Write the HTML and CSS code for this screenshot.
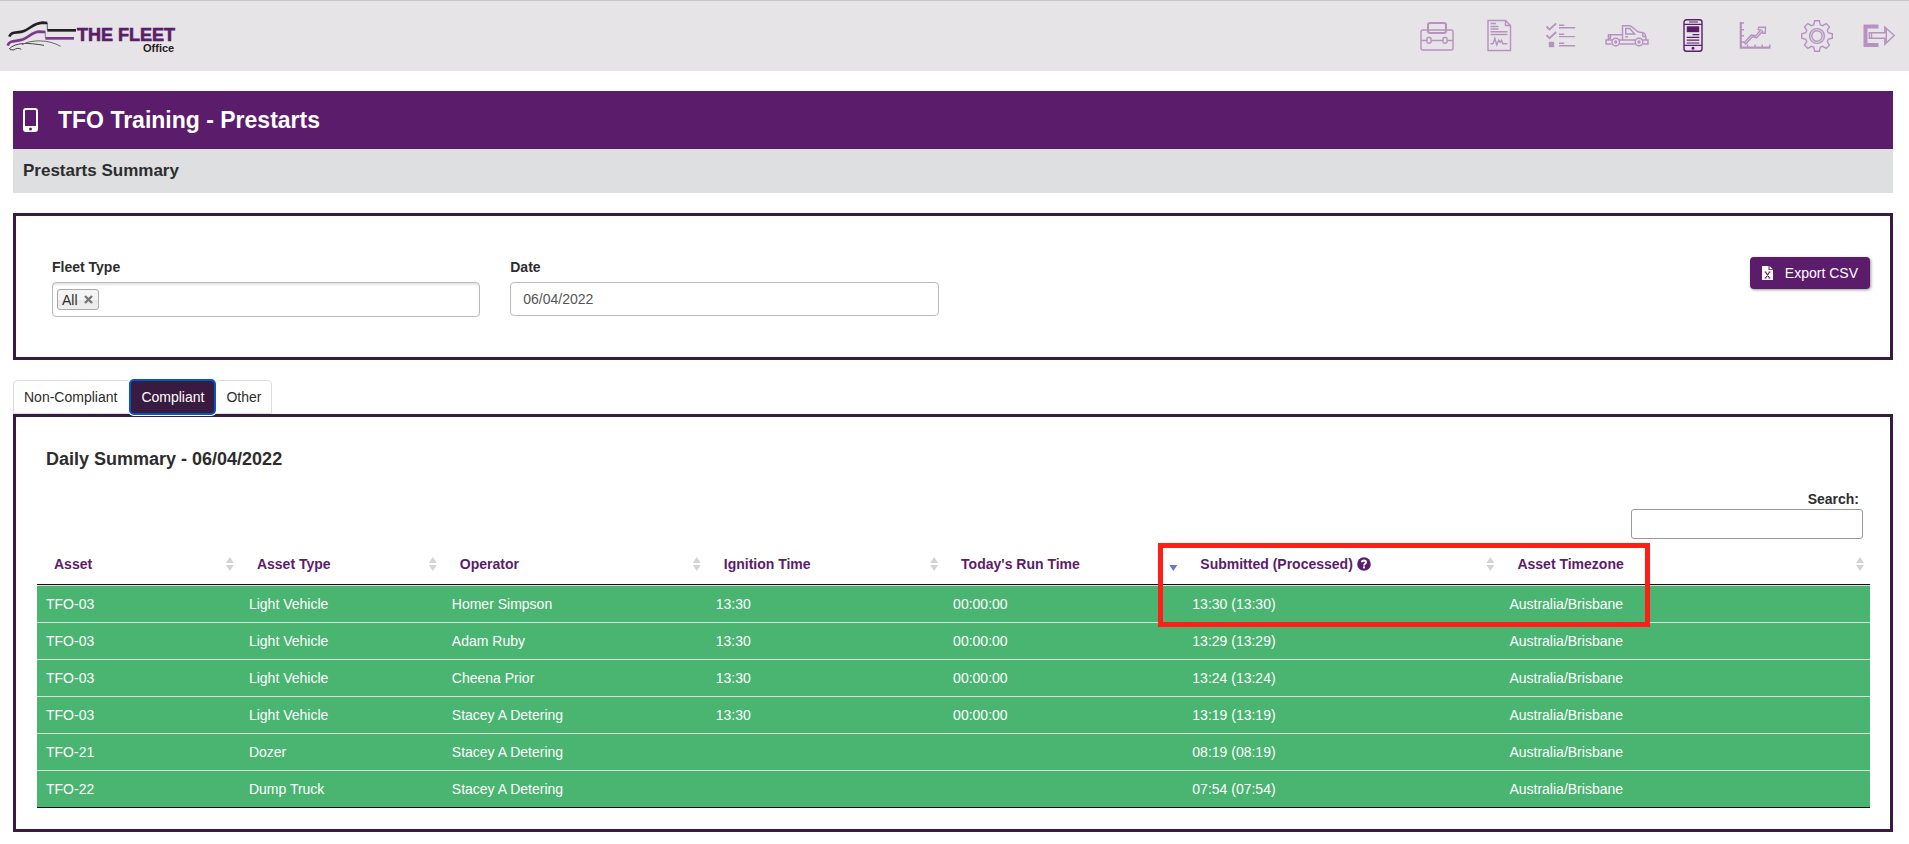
FILE: index.html
```html
<!DOCTYPE html>
<html lang="en">
<head>
  <meta charset="UTF-8">
  <title>TFO Training - Prestarts</title>
  <link rel="stylesheet" href="styles.css">
</head>
<body>

<header class="topbar">
  <a class="logo" href="#" aria-label="The Fleet Office">
    <svg width="180" height="70" viewBox="0 3 540 210">
      <g fill="none" stroke-linejoin="round">
        <path d="M28 110 C34 92 52 101 72 93 C92 85 100 70 128 68 L142 69" stroke="#222" stroke-width="8"/>
        <path d="M142 69 V90" stroke="#222" stroke-width="2"/>
        <path d="M142 91 H228" stroke="#222" stroke-width="8"/>
        <path d="M23 137 C28 118 50 126 70 118 C88 110 98 96 118 95 L136 96" stroke="#7b3a8e" stroke-width="8"/>
        <path d="M136 95 V114" stroke="#7b3a8e" stroke-width="2"/>
        <path d="M136 115 H222" stroke="#7b3a8e" stroke-width="8"/>
        <path d="M27 147 C48 126 84 128 132 136" stroke="#444" stroke-width="3"/>
        <path d="M30 149 L42 150 C46 145 56 143 64 148" stroke="#444" stroke-width="3"/>
        <path d="M66 134 C94 118 146 118 182 139" stroke="#666" stroke-width="3"/>
      </g>
      <text class="logo-name" x="231" y="123">THE FLEET</text>
      <text class="logo-sub" x="429" y="156">Office</text>
    </svg>
  </a>

  <nav class="menu">
    <a href="#" aria-label="Toolbox">
      <svg width="44" height="36" viewBox="0 0 44 36">
        <rect x="6" y="12" width="32" height="20" rx="2"/>
        <rect x="13" y="5" width="18" height="10" rx="2" stroke-width="2"/>
        <path d="M6 22.5H12M16 22.5H28M32 22.5H38"/>
        <rect x="12" y="19.5" width="4" height="5.5" rx="1"/>
        <rect x="28" y="19.5" width="4" height="5.5" rx="1"/>
      </svg>
    </a>
    <a href="#" aria-label="Reports">
      <svg width="44" height="36" viewBox="0 0 44 36">
        <path d="M11 2.5H28.5L33.5 7.5V32.5H11ZM28.5 2.5V7.5H33.5"/>
        <path d="M13.5 5.5H19M13.5 8.5H21.5M13.5 11H21.5M13.5 13.7H30.5M13.5 16.5H30.5"/>
        <path d="M13.5 25.7H16L17.8 20.3L19.8 27L21.8 22.3L23.2 24.3L24.5 22.3L25.8 25.7H30.5"/>
      </svg>
    </a>
    <a href="#" aria-label="Checklists">
      <svg width="44" height="36" viewBox="0 0 44 36">
        <path d="M7.5 8.5L10.5 11.5L17.2 5.3M7.5 17.2L10.5 20.2L17.2 14" stroke-width="1.8"/>
        <rect class="solid" x="10.5" y="24.5" width="4" height="4"/>
        <path d="M20 7.3H25.2M20 9.7H36.2M20 16.2H25.2M20 18.6H36.2M20 25.3H25.2M20 27.7H36.2"/>
      </svg>
    </a>
    <a href="#" aria-label="Fleet">
      <svg width="52" height="36" viewBox="0 0 52 36">
        <path d="M7.5 22V16.7H21.5V22M21.5 16.7V7.7H28.5C30.5 7.7 33 11 37.3 14L42 14.6C44.5 15 45 18 45 22"/>
        <path d="M24.7 10.5H28.7L33.7 16H24.7ZM24.3 18.8H27M41.5 15L42 18.5H45M7.5 17V20.5H9.5V17"/>
        <path d="M10.5 26H5V22H11.5M18 22H34.5M41.5 22H47V26H42M18.5 26H34"/>
        <circle cx="14.7" cy="24" r="3.8"/><circle cx="14.7" cy="24" r="1"/>
        <circle cx="38" cy="24" r="3.8"/><circle cx="38" cy="24" r="1"/>
      </svg>
    </a>
    <a class="active" href="#" aria-label="Prestarts">
      <svg width="44" height="36" viewBox="0 0 44 36">
        <rect x="13" y="1.7" width="18" height="31.5" rx="2.5" stroke-width="1.4"/>
        <path d="M13 6.3H31M13 27.4H31M18 4H27" stroke-width="1.2"/>
        <rect class="solid" x="16.5" y="9" width="11" height="4.5"/>
        <path d="M21.5 16.7H28.3M15.7 19.4H28.3M15.7 22.2H28.3M15.7 25H28.3" stroke-width="1.2"/>
        <circle class="solid" cx="22" cy="30.3" r="0.8"/>
      </svg>
    </a>
    <a href="#" aria-label="Charts">
      <svg width="44" height="36" viewBox="0 0 44 36">
        <path d="M7.8 4V29.7H37.5" stroke-width="2.2"/>
        <path d="M8 5H11M8 11.7H11M8 17.7H11M8 24H11M14.5 29V26.5M22 29V26.5M29.2 29V26.5M36.8 29V26.5"/>
        <path d="M11.2 24.7L18.2 17L22.8 17.7L27.8 12L25.2 11.7L25.8 9.3H32.5L32.2 15.3H29.8L29.5 13.3L23.8 19.8L19.2 18.7L12.8 26Z"/>
      </svg>
    </a>
    <a href="#" aria-label="Settings">
      <svg width="44" height="36" viewBox="0 0 44 36">
        <path transform="translate(22 18)" d="M-3.3-11.2L-2.3-15.3H2.3L3.3-11.2L5.6-10.3L9.2-12.4L12.4-9.2L10.3-5.6L11.2-3.3L15.3-2.3V2.3L11.2 3.3L10.3 5.6L12.4 9.2L9.2 12.4L5.6 10.3L3.3 11.2L2.3 15.3H-2.3L-3.3 11.2L-5.6 10.3L-9.2 12.4L-12.4 9.2L-10.3 5.6L-11.2 3.3L-15.3 2.3V-2.3L-11.2-3.3L-10.3-5.6L-12.4-9.2L-9.2-12.4L-5.6-10.3Z"/>
        <circle cx="22" cy="18" r="7.4"/>
        <circle cx="22" cy="18" r="5.2"/>
      </svg>
    </a>
    <a href="#" aria-label="Log out">
      <svg width="44" height="36" viewBox="0 0 44 36">
        <path d="M21.5 8.5H8.5V27H21.5" stroke-width="4"/>
        <path d="M12.2 14.7H27.8V9L37.2 17.5L27.8 26.3V20.3H12.2ZM14.5 14.7V20.3M29.3 10.5V25"/>
      </svg>
    </a>
  </nav>
</header>

<main class="page">
  <div class="title-bar">
    <svg width="15" height="24" viewBox="0 0 15 24" aria-hidden="true">
      <path fill="#fff" fill-rule="evenodd" d="M3 0H12A3 3 0 0 1 15 3V21A3 3 0 0 1 12 24H3A3 3 0 0 1 0 21V3A3 3 0 0 1 3 0ZM2 3V18H13V3Q13 2 12 2H3Q2 2 2 3ZM7.5 19.5A1.5 1.5 0 1 0 7.5 22.5A1.5 1.5 0 1 0 7.5 19.5Z"/>
    </svg>
    <h1>TFO Training - Prestarts</h1>
  </div>
  <h2 class="sub-bar">Prestarts Summary</h2>

  <section class="panel filters">
    <div class="field">
      <span class="label" id="fleet-label">Fleet Type</span>
      <div class="choices" role="group" aria-labelledby="fleet-label">
        <span class="choice">All
          <button type="button" aria-label="Remove All">
            <svg width="9" height="9" viewBox="0 0 9 9"><path d="M1 1L8 8M8 1L1 8" stroke="#777" stroke-width="2.4"/></svg>
          </button>
        </span>
      </div>
    </div>
    <div class="field">
      <label class="label" for="date">Date</label>
      <input class="date" type="text" id="date" value="06/04/2022">
    </div>
    <button type="button" class="btn-export">
      <svg width="11" height="14" viewBox="0 0 11 14" aria-hidden="true">
        <path fill="#fff" d="M0 0H6.5V4H11V14H0ZM7.5 0L11 3.2H7.5Z"/>
        <path d="M3.5 6L7.5 12M7.5 6L3.5 12M2.6 6H4.4M6.6 6H8.4M2.6 12H4.4M6.6 12H8.4" stroke="#5c1c6c" stroke-width="1.2" fill="none"/>
      </svg>
      Export CSV
    </button>
  </section>

  <div class="tabs" role="tablist">
    <button type="button" role="tab">Non-Compliant</button>
    <button type="button" role="tab" class="selected" aria-selected="true">Compliant</button>
    <button type="button" role="tab">Other</button>
  </div>

  <section class="panel results">
    <h3>Daily Summary - 06/04/2022</h3>
    <div class="search">
      <label class="label" for="search">Search:</label>
      <input type="search" id="search">
    </div>

    <div class="table-wrap">
      <table>
        <colgroup>
          <col class="col-asset"><col class="col-asset"><col class="col-operator"><col class="col-ignition">
          <col class="col-run"><col class="col-submitted"><col>
        </colgroup>
        <thead>
          <tr>
            <th><button type="button" class="sort">Asset</button></th>
            <th><button type="button" class="sort">Asset Type</button></th>
            <th><button type="button" class="sort">Operator</button></th>
            <th><button type="button" class="sort">Ignition Time</button></th>
            <th aria-sort="descending"><button type="button" class="sort desc">Today's Run Time</button></th>
            <th>
              <button type="button" class="sort"><span>Submitted (Processed)
                <svg class="help" width="14" height="14" viewBox="0 0 14 14" aria-hidden="true">
                  <circle cx="7" cy="7" r="6.8" fill="#5c1c6c"/>
                  <path d="M4.9 5.3C5 2.9 9 3 9 5.2C9 6.8 7 6.6 7 8.5" fill="none" stroke="#fff" stroke-width="1.9"/>
                  <rect x="6" y="9.4" width="2" height="2" fill="#fff"/>
                </svg></span></button>
            </th>
            <th><button type="button" class="sort">Asset Timezone</button></th>
          </tr>
        </thead>
        <tbody>
          <tr><td>TFO-03</td><td>Light Vehicle</td><td>Homer Simpson</td><td>13:30</td><td>00:00:00</td><td>13:30 (13:30)</td><td>Australia/Brisbane</td></tr>
          <tr><td>TFO-03</td><td>Light Vehicle</td><td>Adam Ruby</td><td>13:30</td><td>00:00:00</td><td>13:29 (13:29)</td><td>Australia/Brisbane</td></tr>
          <tr><td>TFO-03</td><td>Light Vehicle</td><td>Cheena Prior</td><td>13:30</td><td>00:00:00</td><td>13:24 (13:24)</td><td>Australia/Brisbane</td></tr>
          <tr><td>TFO-03</td><td>Light Vehicle</td><td>Stacey A Detering</td><td>13:30</td><td>00:00:00</td><td>13:19 (13:19)</td><td>Australia/Brisbane</td></tr>
          <tr><td>TFO-21</td><td>Dozer</td><td>Stacey A Detering</td><td></td><td></td><td>08:19 (08:19)</td><td>Australia/Brisbane</td></tr>
          <tr><td>TFO-22</td><td>Dump Truck</td><td>Stacey A Detering</td><td></td><td></td><td>07:54 (07:54)</td><td>Australia/Brisbane</td></tr>
        </tbody>
      </table>
      <!-- red callout round the submitted / timezone columns -->
      <div class="callout"></div>
    </div>
  </section>
</main>

</body>
</html>
```

FILE: styles.css
```css
* { box-sizing: border-box; }
body { margin: 0; font: 14px/20px "Liberation Sans", Arial, sans-serif; color: #2d2d2d; background: #fff; }
button, input { font: inherit; color: inherit; }
button { cursor: pointer; }
h1, h2, h3 { margin: 0; font-weight: bold; }

/* top bar */
.topbar { display: flex; justify-content: space-between; align-items: center; height: 71px; padding-right: 8px; background: #e7e4e8; border-top: 1px solid #c4c6c9; }
.logo svg { display: block; }
.logo-name { font-size: 54px; font-weight: bold; fill: #5c1c6c; stroke: #5c1c6c; stroke-width: 2; }
.logo-sub { font-size: 33px; font-weight: bold; fill: #222; }
.menu { display: flex; gap: 18px; }
.menu a { color: #b592c0; }
.menu a.active { color: #5c1c6c; }
.menu svg { display: block; fill: none; stroke: currentColor; stroke-width: 1.4; }
.menu .solid { fill: currentColor; }

/* page heading */
.page { padding: 20px 16px 12px 13px; }
.title-bar { display: flex; align-items: center; gap: 20px; height: 58px; padding: 0 10px; background: #5c1c6c; color: #fff; }
.title-bar h1 { font-size: 23px; line-height: 28px; }
.sub-bar { padding: 12px 10px; font-size: 17px; background: #dedfe1; }

.panel { border: 3px solid #391a40; }
.label { font-weight: bold; }

/* filters */
.filters { display: flex; align-items: flex-start; margin-top: 20px; padding: 41px 20px 40px 21px; }
.field { display: flex; flex-direction: column; gap: 5px; width: 25%; padding: 0 15px; }
.choices { height: 35px; padding: 6px 4px; border: 1px solid #bbb; border-radius: 4px; box-shadow: inset 0 2px 2px #e4e4e4; }
.choice { display: inline-flex; align-items: center; gap: 6px; height: 21px; padding: 0 5px 0 4px; border: 1px solid #aaa; border-radius: 3px; background: linear-gradient(#f4f4f4 50%, #e8e8e8 50%, #eee); }
.choice button { display: flex; padding: 0; border: none; background: none; }
.date { width: 100%; height: 34px; padding: 0 12px; color: #555; border: 1px solid #bbb; border-radius: 4px; background: #fff; }
.btn-export { display: flex; align-items: center; gap: 12px; height: 32px; margin-left: auto; padding: 0 12px; color: #fff; border: none; border-radius: 4px; background: #5c1c6c; box-shadow: 1px 1px 3px #999; }

/* tabs */
.tabs { display: flex; margin-top: 20px; height: 34px; }
.tabs button { padding: 0 12px 0 10px; border: 1px solid #ddd; border-radius: 4px 4px 0 0; background: #fff; }
.tabs button + button { padding: 0 10px; }
.tabs .selected { position: relative; color: #fff; border-color: #391a40; border-radius: 4px; background: #391a40; outline: 2px solid #0058c8; outline-offset: -1px; box-shadow: 0 0 0 2px #fff; }

/* results */
.results { padding: 32px 20px 21px 21px; }
.results h3 { padding-left: 9px; font-size: 18px; }
.search { display: flex; flex-direction: column; align-items: flex-end; margin-top: 20px; padding-right: 7px; }
.search label { margin-right: 4px; }
.search input { width: 232px; height: 30px; border: 1px solid #999; border-radius: 3px; background: #fff; }
.table-wrap { position: relative; margin-top: 4px; }
table { width: 100%; table-layout: fixed; border-spacing: 0; border-bottom: 1px solid #111; }
.col-asset { width: 11.07%; }
.col-operator { width: 14.4%; }
.col-ignition { width: 12.95%; }
.col-run { width: 13.05%; }
.col-submitted { width: 17.3%; }
th { padding: 11px 6px 10px 17px; border-bottom: 1px solid #111; }
td { height: 37px; padding: 8px 9px; color: #fff; background: #49b571; border-top: 1px solid #ddd; }
.sort { display: flex; justify-content: space-between; align-items: center; width: 100%; height: 20px; padding: 0; font-weight: bold; text-align: left; color: #5c1c6c; border: none; background: none; }
.help { vertical-align: -2px; }
/* up and down arrows */
.sort::after { content: ""; width: 8px; height: 14px; background: #d4d4d4; clip-path: polygon(50% 0, 100% 43%, 0 43%, 0 57%, 100% 57%, 50% 100%, 0 57%, 0 43%); }
.sort.desc::after { background: #6b74dd; clip-path: polygon(0 57%, 100% 57%, 50% 100%); }

.callout { position: absolute; top: 0; left: 61.15%; width: 26.85%; height: 84px; border: 5px solid #ff1e18; pointer-events: none; }
```
